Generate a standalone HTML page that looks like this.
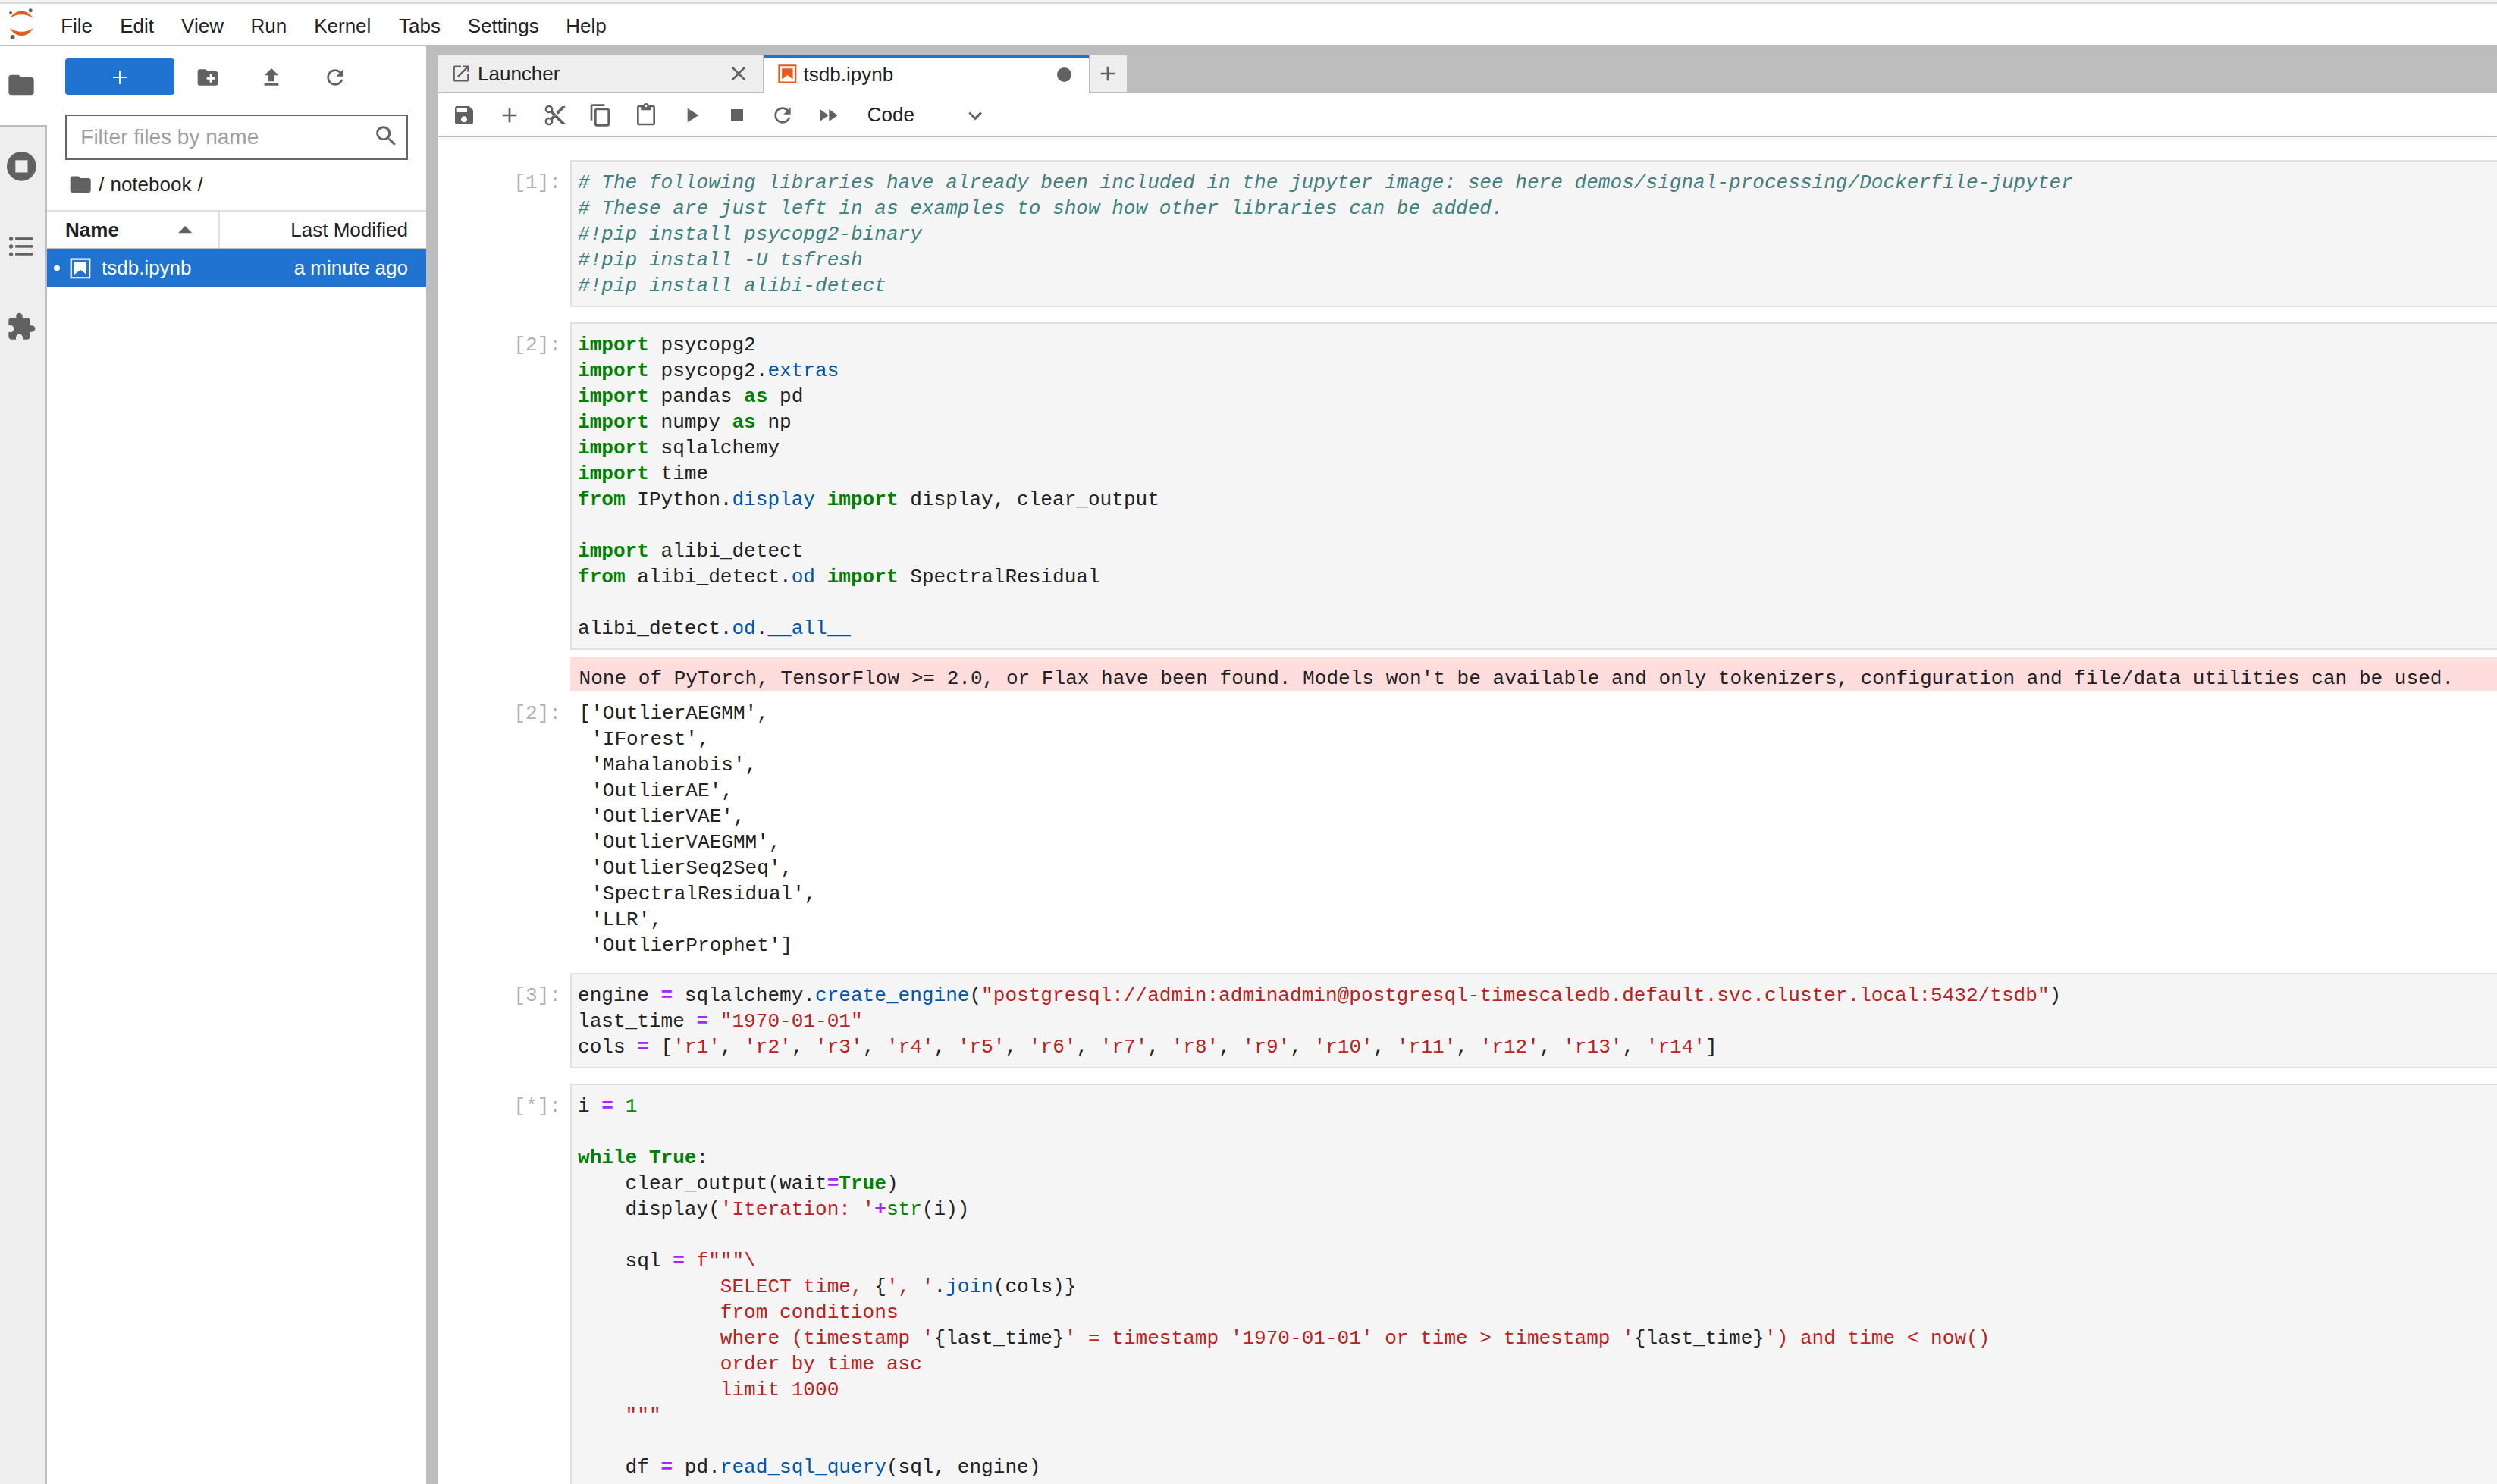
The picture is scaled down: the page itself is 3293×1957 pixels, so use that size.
<!DOCTYPE html>
<html><head><meta charset="utf-8"><style>
html,body{margin:0;padding:0}
body{width:3293px;height:1957px;overflow:hidden;position:relative;background:#fff;font-family:"Liberation Sans", sans-serif}
.r{position:absolute}
.t{position:absolute;line-height:30px;white-space:pre}
.ic{position:absolute;overflow:visible}
pre{position:absolute;margin:0;font-family:"Liberation Mono", monospace;font-size:26.08px;line-height:34px;color:#212121;white-space:pre}
.k{color:#008000;font-weight:bold}
.p{color:#0055aa}
.o{color:#aa22ff;font-weight:bold}
.s{color:#ba2121}
.n{color:#008800}
.b{color:#008000}
.c{color:#408080;font-style:italic}
</style></head><body>
<div class="r" style="left:0px;top:0px;width:3293px;height:3px;background:#f3f3f3;"></div>
<div class="r" style="left:0px;top:3px;width:3293px;height:2px;background:#d5d8dc;"></div>
<div class="r" style="left:0px;top:59px;width:3293px;height:2px;background:#bdbdbd;"></div>
<svg class="ic" style="left:0px;top:5px;width:60px;height:54px" viewBox="0 0 60 54">
<path d="M13.3 19.3 C19.5 6.5 37.5 6.5 43.6 19.3 C36.5 12.5 20.5 12.5 13.3 19.3 Z" fill="#e55b1a"/>
<path d="M13.3 31.8 C19.5 45.5 37.5 45.5 43.6 31.8 C36.5 38.5 20.5 38.5 13.3 31.8 Z" fill="#e55b1a"/>
<circle cx="40.2" cy="8.7" r="2.5" fill="#616161"/>
<circle cx="14.1" cy="11.8" r="1.9" fill="#616161"/>
<circle cx="16.6" cy="44" r="3" fill="#616161"/>
</svg>
<div class="t" style="left:80.2px;top:19.19px;font-size:26px;color:#212121;font-weight:normal;">File</div>
<div class="t" style="left:158.2px;top:19.19px;font-size:26px;color:#212121;font-weight:normal;">Edit</div>
<div class="t" style="left:239.1px;top:19.19px;font-size:26px;color:#212121;font-weight:normal;">View</div>
<div class="t" style="left:330.4px;top:19.19px;font-size:26px;color:#212121;font-weight:normal;">Run</div>
<div class="t" style="left:414.2px;top:19.19px;font-size:26px;color:#212121;font-weight:normal;">Kernel</div>
<div class="t" style="left:526.1px;top:19.19px;font-size:26px;color:#212121;font-weight:normal;">Tabs</div>
<div class="t" style="left:616.7px;top:19.19px;font-size:26px;color:#212121;font-weight:normal;">Settings</div>
<div class="t" style="left:746.2px;top:19.19px;font-size:26px;color:#212121;font-weight:normal;">Help</div>
<div class="r" style="left:0px;top:61px;width:60px;height:1896px;background:#eeeeee;"></div>
<div class="r" style="left:60px;top:165px;width:2px;height:1792px;background:#bdbdbd;"></div>
<div class="r" style="left:0px;top:165px;width:62px;height:2px;background:#bdbdbd;"></div>
<div class="r" style="left:0px;top:61px;width:62px;height:104px;background:#ffffff;"></div>
<svg class="ic" style="left:7.5px;top:91.5px;width:40px;height:40px;" viewBox="0 0 24 24" fill="#616161" preserveAspectRatio="none"><path d="M10 4H4c-1.1 0-1.99.9-1.99 2L2 18c0 1.1.9 2 2 2h16c1.1 0 2-.9 2-2V8c0-1.1-.9-2-2-2h-8l-2-2z"/></svg>
<svg class="ic" style="left:8.9px;top:199.6px;width:38.8px;height:38.8px;" viewBox="0 0 24 24" fill="#616161" preserveAspectRatio="none"><circle cx="12" cy="12" r="12"/><rect x="7" y="7" width="10" height="10" fill="#eeeeee"/></svg>
<svg class="ic" style="left:12px;top:312px;width:31.5px;height:25px;" viewBox="0 0 31.5 25" fill="#616161" preserveAspectRatio="none"><circle cx="2.6" cy="2.9" r="2.6"/><circle cx="2.6" cy="12.9" r="2.6"/><circle cx="2.6" cy="23" r="2.6"/><rect x="8.1" y="1.15" width="23" height="3.5"/><rect x="8.1" y="11.15" width="23" height="3.5"/><rect x="8.1" y="21.25" width="23" height="3.5"/></svg>
<svg class="ic" style="left:7.5px;top:411px;width:40px;height:40px;" viewBox="0 0 24 24" fill="#616161" preserveAspectRatio="none"><path d="M20.5 11H19V7c0-1.1-.9-2-2-2h-4V3.5C13 2.12 11.88 1 10.5 1S8 2.12 8 3.5V5H4c-1.1 0-1.99.9-1.99 2v3.8H3.5c1.49 0 2.7 1.21 2.7 2.7s-1.21 2.7-2.7 2.7H2V20c0 1.1.9 2 2 2h3.8v-1.5c0-1.49 1.21-2.7 2.7-2.7 1.49 0 2.7 1.21 2.7 2.7V22H17c1.1 0 2-.9 2-2v-4h1.5c1.38 0 2.5-1.12 2.5-2.5S21.88 11 20.5 11z"/></svg>
<div class="r" style="left:86px;top:77px;width:144px;height:48px;background:#2073d0;border-radius:4px"></div>
<div class="r" style="left:148.7px;top:101px;width:18.7px;height:1.8px;background:#fff;"></div>
<div class="r" style="left:157.1px;top:92.9px;width:1.8px;height:18px;background:#fff;"></div>
<svg class="ic" style="left:258px;top:86px;width:32px;height:32px;" viewBox="0 0 24 24" fill="#616161" preserveAspectRatio="none"><path d="M20 6h-8l-2-2H4c-1.11 0-1.99.89-1.99 2L2 18c0 1.11.89 2 2 2h16c1.11 0 2-.89 2-2V8c0-1.11-.89-2-2-2zm-1 8h-3v3h-2v-3h-3v-2h3V9h2v3h3v2z"/></svg>
<svg class="ic" style="left:341.5px;top:86px;width:32px;height:32px;" viewBox="0 0 24 24" fill="#616161" preserveAspectRatio="none"><path d="M9 16h6v-6h4l-7-7-7 7h4zm-4 2h14v2H5z"/></svg>
<svg class="ic" style="left:425.7px;top:85.7px;width:32px;height:32px;" viewBox="0 0 24 24" fill="#616161" preserveAspectRatio="none"><path d="M17.65 6.35C16.2 4.9 14.21 4 12 4c-4.42 0-7.99 3.58-7.99 8s3.57 8 7.99 8c3.73 0 6.84-2.55 7.73-6h-2.08c-.82 2.33-3.04 4-5.65 4-3.31 0-6-2.69-6-6s2.69-6 6-6c1.66 0 3.14.69 4.22 1.78L13 11h7V4l-2.35 2.35z"/></svg>
<div class="r" style="left:86px;top:151px;width:452px;height:60px;background:#fff;box-sizing:border-box;border:2px solid #666666"></div>
<div class="t" style="left:106.3px;top:165.80px;font-size:28px;color:#9e9e9e;font-weight:normal;">Filter files by name</div>
<svg class="ic" style="left:493.4px;top:162.8px;width:32px;height:32px;" viewBox="0 0 18 18" fill="#616161" preserveAspectRatio="none"><path d="M12.1,10.9h-0.7l-0.2-0.2c0.8-0.9,1.3-2.2,1.3-3.5c0-3-2.4-5.4-5.4-5.4S1.8,4.2,1.8,7.1s2.4,5.4,5.4,5.4c1.3,0,2.5-0.5,3.5-1.3l0.2,0.2v0.7l4.1,4.1l1.2-1.2L12.1,10.9z M7.1,10.9c-2.1,0-3.7-1.7-3.7-3.7s1.7-3.7,3.7-3.7s3.7,1.7,3.7,3.7S9.3,10.9,7.1,10.9z"/></svg>
<svg class="ic" style="left:89.8px;top:226.7px;width:32.4px;height:32.4px;" viewBox="0 0 24 24" fill="#616161" preserveAspectRatio="none"><path d="M10 4H4c-1.1 0-1.99.9-1.99 2L2 18c0 1.1.9 2 2 2h16c1.1 0 2-.9 2-2V8c0-1.1-.9-2-2-2h-8l-2-2z"/></svg>
<div class="t" style="left:130.2px;top:227.79px;font-size:26px;color:#212121;font-weight:normal;">/</div>
<div class="t" style="left:145.45px;top:227.79px;font-size:26px;color:#212121;font-weight:normal;">notebook</div>
<div class="t" style="left:260.4px;top:227.79px;font-size:26px;color:#212121;font-weight:normal;">/</div>
<div class="r" style="left:62px;top:277px;width:500px;height:2px;background:#e0e0e0;"></div>
<div class="r" style="left:62px;top:327px;width:500px;height:2px;background:#bdbdbd;"></div>
<div class="r" style="left:288px;top:279px;width:1.6px;height:48px;background:#e0e0e0;"></div>
<div class="t" style="left:86.10000000000001px;top:287.99px;font-size:26px;color:#212121;font-weight:bold;">Name</div>
<svg class="ic" style="left:234.8px;top:297.7px;width:18.4px;height:9.3px;" viewBox="0 0 18.4 9.3" fill="#616161" preserveAspectRatio="none"><path d="M0 9.3L9.2 0L18.4 9.3z"/></svg>
<div class="t" style="right:2755px;top:287.99px;font-size:26px;color:#212121;font-weight:normal;">Last Modified</div>
<div class="r" style="left:62px;top:329px;width:500px;height:50px;background:#2073d0;"></div>
<div class="r" style="left:71.1px;top:349.5px;width:7.8px;height:7.8px;border-radius:50%;background:#fff"></div>
<svg class="ic" style="left:89.9px;top:337.7px;width:32px;height:32px;transform:scale(1.0)" viewBox="0 0 22 22" fill="#fff" preserveAspectRatio="none"><path d="M18.7 3.3v15.4H3.3V3.3h15.4m1.5-1.5H1.8v18.3h18.3l.1-18.3z"/><path d="M16.5 16.5l-5.4-4.3-5.6 4.3v-11h11z"/></svg>
<div class="t" style="left:134.0px;top:337.99px;font-size:26px;color:#fff;font-weight:normal;">tsdb.ipynb</div>
<div class="t" style="right:2755px;top:337.99px;font-size:26px;color:#fff;font-weight:normal;">a minute ago</div>
<div class="r" style="left:562px;top:59px;width:16px;height:1898px;background:#bdbdbd;"></div>
<div class="r" style="left:578px;top:59px;width:2715px;height:64px;background:#bdbdbd;"></div>
<div class="r" style="left:578px;top:73px;width:428px;height:48px;background:#eeeeee;"></div>
<div class="r" style="left:1008px;top:73px;width:428px;height:50px;background:#ffffff;"></div>
<div class="r" style="left:1008px;top:73px;width:428px;height:4px;background:#2073d0;"></div>
<div class="r" style="left:1437.5px;top:73px;width:48px;height:48px;background:#eeeeee;"></div>
<svg class="ic" style="left:593.7px;top:82.7px;width:28px;height:28px;" viewBox="0 0 24 24" fill="#616161" preserveAspectRatio="none"><path d="M19 19H5V5h7V3H5a2 2 0 00-2 2v14a2 2 0 002 2h14c1.1 0 2-.9 2-2v-7h-2v7zM14 3v2h3.59l-9.83 9.83 1.41 1.41L19 6.41V10h2V3h-7z"/></svg>
<div class="t" style="left:630px;top:82.39px;font-size:26px;color:#212121;font-weight:normal;">Launcher</div>
<svg class="ic" style="left:958.3px;top:81.3px;width:32px;height:32px;" viewBox="0 0 24 24" fill="#616161" preserveAspectRatio="none"><path d="M19 6.41L17.59 5 12 10.59 6.41 5 5 6.41 10.59 12 5 17.59 6.41 19 12 13.41 17.59 19 19 17.59 13.41 12z"/></svg>
<svg class="ic" style="left:1023.7px;top:82.7px;width:28.8px;height:28.8px;" viewBox="0 0 22 22" fill="#e65a1b" preserveAspectRatio="none"><path d="M18.7 3.3v15.4H3.3V3.3h15.4m1.5-1.5H1.8v18.3h18.3l.1-18.3z"/><path d="M16.5 16.5l-5.4-4.3-5.6 4.3v-11h11z"/></svg>
<div class="t" style="left:1059.6px;top:82.99px;font-size:26px;color:#212121;font-weight:normal;">tsdb.ipynb</div>
<div class="r" style="left:1394px;top:88.5px;width:19px;height:19px;border-radius:50%;background:#616161"></div>
<svg class="ic" style="left:1445px;top:81.3px;width:32px;height:32px;" viewBox="0 0 24 24" fill="#616161" preserveAspectRatio="none"><path d="M19 13h-6v6h-2v-6H5v-2h6V5h2v6h6v2z"/></svg>
<div class="r" style="left:578px;top:179px;width:2715px;height:2px;background:#bdbdbd;box-shadow:0 1px 5px rgba(0,0,0,0.13)"></div>
<svg class="ic" style="left:596px;top:136px;width:32px;height:32px;" viewBox="0 0 24 24" fill="#616161" preserveAspectRatio="none"><path d="M17 3H5c-1.11 0-2 .9-2 2v14c0 1.1.89 2 2 2h14c1.1 0 2-.9 2-2V7l-4-4zm-5 16c-1.66 0-3-1.34-3-3s1.34-3 3-3 3 1.34 3 3-1.34 3-3 3zm3-10H5V5h10v4z"/></svg>
<svg class="ic" style="left:656px;top:136px;width:32px;height:32px;" viewBox="0 0 24 24" fill="#616161" preserveAspectRatio="none"><path d="M19 13h-6v6h-2v-6H5v-2h6V5h2v6h6v2z"/></svg>
<svg class="ic" style="left:716px;top:136px;width:32px;height:32px;" viewBox="0 0 24 24" fill="#616161" preserveAspectRatio="none"><path d="M9.64 7.64c.23-.5.36-1.05.36-1.64 0-2.21-1.79-4-4-4S2 3.79 2 6s1.79 4 4 4c.59 0 1.14-.13 1.64-.36L10 12l-2.36 2.36C7.14 14.13 6.59 14 6 14c-2.21 0-4 1.79-4 4s1.79 4 4 4 4-1.79 4-4c0-.59-.13-1.14-.36-1.64L12 14l7 7h3v-1L9.64 7.64zM6 8c-1.1 0-2-.89-2-2s.9-2 2-2 2 .89 2 2-.9 2-2 2zm0 12c-1.1 0-2-.89-2-2s.9-2 2-2 2 .89 2 2-.9 2-2 2zm6-7.5c-.28 0-.5-.22-.5-.5s.22-.5.5-.5.5.22.5.5-.22.5-.5.5zM19 3l-6 6 2 2 7-7V3z"/></svg>
<svg class="ic" style="left:776px;top:136px;width:32px;height:32px;" viewBox="0 0 24 24" fill="#616161" preserveAspectRatio="none"><path d="M16 1H4c-1.1 0-2 .9-2 2v14h2V3h12V1zm3 4H8c-1.1 0-2 .9-2 2v14c0 1.1.9 2 2 2h11c1.1 0 2-.9 2-2V7c0-1.1-.9-2-2-2zm0 16H8V7h11v14z"/></svg>
<svg class="ic" style="left:836px;top:136px;width:32px;height:32px;" viewBox="0 0 24 24" fill="#616161" preserveAspectRatio="none"><path d="M19 2h-4.18C14.4.84 13.3 0 12 0c-1.3 0-2.4.84-2.82 2H5c-1.1 0-2 .9-2 2v16c0 1.1.9 2 2 2h14c1.1 0 2-.9 2-2V4c0-1.1-.9-2-2-2zm-7 0c.55 0 1 .45 1 1s-.45 1-1 1-1-.45-1-1 .45-1 1-1zm7 18H5V4h2v3h10V4h2v16z"/></svg>
<svg class="ic" style="left:896px;top:136px;width:32px;height:32px;" viewBox="0 0 24 24" fill="#616161" preserveAspectRatio="none"><path d="M8 5v14l11-7z"/></svg>
<svg class="ic" style="left:956px;top:136px;width:32px;height:32px;" viewBox="0 0 24 24" fill="#616161" preserveAspectRatio="none"><path d="M6 6h12v12H6z"/></svg>
<svg class="ic" style="left:1016px;top:136px;width:32px;height:32px;" viewBox="0 0 24 24" fill="#616161" preserveAspectRatio="none"><path d="M17.65 6.35C16.2 4.9 14.21 4 12 4c-4.42 0-7.99 3.58-7.99 8s3.57 8 7.99 8c3.73 0 6.84-2.55 7.73-6h-2.08c-.82 2.33-3.04 4-5.65 4-3.31 0-6-2.69-6-6s2.69-6 6-6c1.66 0 3.14.69 4.22 1.78L13 11h7V4l-2.35 2.35z"/></svg>
<svg class="ic" style="left:1076px;top:136px;width:32px;height:32px;" viewBox="0 0 24 24" fill="#616161" preserveAspectRatio="none"><path d="M4 18l8.5-6L4 6v12zm9-12v12l8.5-6L13 6z"/></svg>
<div class="t" style="left:1143.8000000000002px;top:135.59px;font-size:26px;color:#212121;font-weight:normal;">Code</div>
<svg class="ic" style="left:1269.7px;top:137.1px;width:32px;height:32px;" viewBox="0 0 18 18" fill="#616161" preserveAspectRatio="none"><path d="M5.2,5.9L9,9.7l3.8-3.8l1.2,1.2l-4.9,5l-4.9-5L5.2,5.9z"/></svg>
<div class="r" style="left:752px;top:211px;width:2551px;height:194px;background:#f5f5f5;box-sizing:border-box;border:2px solid #e0e0e0"></div>
<pre style="right:2553px;top:223.56px;color:#b0b0b0">[1]:</pre>
<pre class="code" style="left:762px;top:223.56px"><span class="c"># The following libraries have already been included in the jupyter image: see here demos/signal-processing/Dockerfile-jupyter</span>
<span class="c"># These are just left in as examples to show how other libraries can be added.</span>
<span class="c">#!pip install psycopg2-binary</span>
<span class="c">#!pip install -U tsfresh</span>
<span class="c">#!pip install alibi-detect</span></pre>
<div class="r" style="left:752px;top:425px;width:2551px;height:432px;background:#f5f5f5;box-sizing:border-box;border:2px solid #e0e0e0"></div>
<pre style="right:2553px;top:438.06px;color:#b0b0b0">[2]:</pre>
<pre class="code" style="left:762px;top:438.06px"><span class="k">import</span> psycopg2
<span class="k">import</span> psycopg2.<span class="p">extras</span>
<span class="k">import</span> pandas <span class="k">as</span> pd
<span class="k">import</span> numpy <span class="k">as</span> np
<span class="k">import</span> sqlalchemy
<span class="k">import</span> time
<span class="k">from</span> IPython.<span class="p">display</span> <span class="k">import</span> display, clear_output

<span class="k">import</span> alibi_detect
<span class="k">from</span> alibi_detect.<span class="p">od</span> <span class="k">import</span> SpectralResidual

alibi_detect.<span class="p">od</span>.<span class="p">__all__</span></pre>
<div class="r" style="left:752px;top:867px;width:2541px;height:44px;background:#ffdddd;"></div>
<pre class="code" style="left:763.5px;top:878.06px">None of PyTorch, TensorFlow &gt;= 2.0, or Flax have been found. Models won't be available and only tokenizers, configuration and file/data utilities can be used.</pre>
<pre style="right:2553px;top:924.06px;color:#b0b0b0">[2]:</pre>
<pre class="code" style="left:763.5px;top:924.06px">['OutlierAEGMM',
 'IForest',
 'Mahalanobis',
 'OutlierAE',
 'OutlierVAE',
 'OutlierVAEGMM',
 'OutlierSeq2Seq',
 'SpectralResidual',
 'LLR',
 'OutlierProphet']</pre>
<div class="r" style="left:752px;top:1283px;width:2551px;height:126px;background:#f5f5f5;box-sizing:border-box;border:2px solid #e0e0e0"></div>
<pre style="right:2553px;top:1296.06px;color:#b0b0b0">[3]:</pre>
<pre class="code" style="left:762px;top:1296.06px">engine <span class="o">=</span> sqlalchemy.<span class="p">create_engine</span>(<span class="s">"postgresql://admin:adminadmin@postgresql-timescaledb.default.svc.cluster.local:5432/tsdb"</span>)
last_time <span class="o">=</span> <span class="s">"1970-01-01"</span>
cols <span class="o">=</span> [<span class="s">'r1'</span>, <span class="s">'r2'</span>, <span class="s">'r3'</span>, <span class="s">'r4'</span>, <span class="s">'r5'</span>, <span class="s">'r6'</span>, <span class="s">'r7'</span>, <span class="s">'r8'</span>, <span class="s">'r9'</span>, <span class="s">'r10'</span>, <span class="s">'r11'</span>, <span class="s">'r12'</span>, <span class="s">'r13'</span>, <span class="s">'r14'</span>]</pre>
<div class="r" style="left:752px;top:1429px;width:2551px;height:704px;background:#f5f5f5;box-sizing:border-box;border:2px solid #e0e0e0"></div>
<pre style="right:2553px;top:1442.06px;color:#b0b0b0">[*]:</pre>
<pre class="code" style="left:762px;top:1442.06px">i <span class="o">=</span> <span class="n">1</span>

<span class="k">while</span> <span class="k">True</span>:
    clear_output(wait<span class="o">=</span><span class="k">True</span>)
    display(<span class="s">'Iteration: '</span><span class="o">+</span><span class="b">str</span>(i))

    sql <span class="o">=</span> <span class="s">f"""\</span>
<span class="s">            SELECT time, </span>{<span class="s">', '</span>.<span class="p">join</span>(cols)}
<span class="s">            from conditions</span>
<span class="s">            where (timestamp '</span>{last_time}<span class="s">' = timestamp '1970-01-01' or time &gt; timestamp '</span>{last_time}<span class="s">') and time &lt; now()</span>
<span class="s">            order by time asc</span>
<span class="s">            limit 1000</span>
<span class="s">    """</span>

    df <span class="o">=</span> pd.<span class="p">read_sql_query</span>(sql, engine)
    df <span class="o">=</span> df.<span class="p">fillna</span>(method<span class="o">=</span><span class="s">'ffill'</span>)</pre>
</body></html>
